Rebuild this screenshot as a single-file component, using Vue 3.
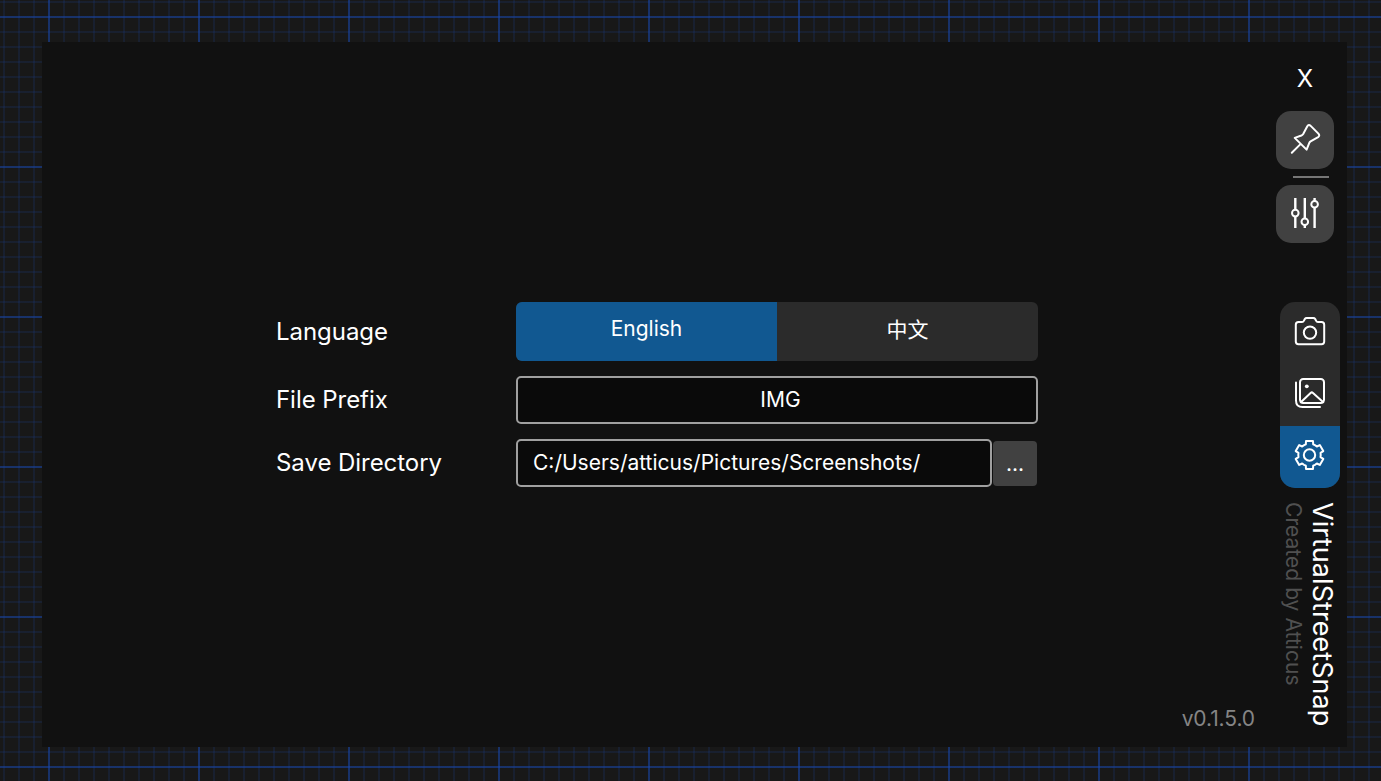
<script setup>
import { ref } from 'vue'

const language = ref('en')
const prefix = ref('IMG')
const directory = ref('C:/Users/atticus/Pictures/Screenshots/')

// Outline of a six-toothed gear, one tooth every 60 degrees.
const tooth = [[-5.4, -9.8], [-3.7, -10.6], [-3.5, -13.9], [3.5, -13.9], [3.7, -10.6], [5.4, -9.8]]
const gear = 'M' + Array.from({ length: 6 }, (_, k) => {
  const a = (k * Math.PI) / 3
  return tooth.map(([x, y]) =>
    `${(x * Math.cos(a) - y * Math.sin(a)).toFixed(2)} ${(x * Math.sin(a) + y * Math.cos(a)).toFixed(2)}`
  ).join('L')
}).join('L') + 'Z'
</script>

<template>
  <div class="desktop">
    <div class="window">
      <main class="content">
        <form class="settings" @submit.prevent>
          <div class="row language">
            <span class="label">Language</span>
            <div class="segmented">
              <button type="button" :class="{ active: language === 'en' }" @click="language = 'en'">English</button>
              <button type="button" :class="{ active: language === 'zh' }" @click="language = 'zh'">中文</button>
            </div>
          </div>
          <div class="row">
            <span class="label">File Prefix</span>
            <div class="field prefix">{{ prefix }}</div>
          </div>
          <div class="row">
            <span class="label">Save Directory</span>
            <div class="field directory">{{ directory }}</div>
            <button type="button" class="browse">...</button>
          </div>
        </form>
        <span class="version">v0.1.5.0</span>
      </main>

      <aside class="sidebar">
        <button class="close">X</button>
        <button class="tile">
          <svg width="58" height="58" viewBox="0 0 58 58">
            <path d="M15.8 41.8L24 33.6M18.7 26.9L25.4 24.5Q26.6 24 27.2 23L31.3 15.3Q32.7 13 34.7 14.9L42.4 22.6Q44.2 24.7 42.1 26.1L34.6 30.3Q33.7 30.9 33.3 31.8L30.6 38.6Z" />
          </svg>
        </button>
        <div class="divider"></div>
        <button class="tile">
          <svg width="58" height="58" viewBox="0 0 58 58">
            <path class="rail" d="M19.3 13V24.8M19.3 31.4V43M28.8 13V33.4M28.8 40V43M38.6 13V16M38.6 22.6V43" />
            <circle cx="19.3" cy="28.1" r="3.3" />
            <circle cx="28.8" cy="36.7" r="3.3" />
            <circle cx="38.6" cy="19.3" r="3.3" />
          </svg>
        </button>
        <nav class="nav">
          <button>
            <svg width="60" height="62" viewBox="0 0 60 62">
              <path d="M18.5 20H22Q23.3 20 24 18.6L24.8 17Q25.4 16 26.8 16H33.2Q34.6 16 35.2 17L36 18.6Q36.7 20 38 20H41.5Q44.2 20 44.2 22.7V39.6Q44.2 42.3 41.5 42.3H18.5Q15.8 42.3 15.8 39.6V22.7Q15.8 20 18.5 20Z" />
              <circle cx="30" cy="30.6" r="6.2" />
            </svg>
          </button>
          <button>
            <svg width="60" height="62" viewBox="0 0 60 62">
              <rect x="20" y="15" width="24" height="24" rx="3.2" />
              <path d="M16 18.5V36.5Q16 43 22.5 43H40M20.8 38.2L30.6 28.9Q31.8 27.9 33 28.9L43.3 38.2" />
              <circle class="dot" cx="26.8" cy="22.3" r="1.9" />
            </svg>
          </button>
          <button class="active">
            <svg width="60" height="62" viewBox="0 0 60 62">
              <g transform="translate(29.5 29)">
                <path :d="gear" />
                <circle r="5.7" />
              </g>
            </svg>
          </button>
        </nav>
        <div class="brand">
          <span class="title">VirtualStreetSnap</span>
          <span class="author">Created by Atticus</span>
        </div>
      </aside>
    </div>
  </div>
</template>

<style>
body {
  background: #181818;
}
</style>

<style scoped>
.desktop {
  box-sizing: border-box;
  width: 1381px;
  height: 781px;
  padding: 42px 34px 34px 42px;
  overflow: hidden;
  font-family: Inter, "Noto Sans CJK SC", sans-serif;
  color: #fff;
  background-color: #181818;
  background-image:
    linear-gradient(90deg, rgba(24, 72, 176, 0.45) 2px, transparent 2px),
    linear-gradient(rgba(24, 72, 176, 0.45) 2px, transparent 2px),
    linear-gradient(90deg, rgba(24, 64, 150, 0.18) 2px, transparent 2px),
    linear-gradient(rgba(24, 64, 150, 0.18) 2px, transparent 2px);
  background-size: 150px 150px, 150px 150px, 15px 15px, 15px 15px;
  background-position: 48px 16px, 48px 16px, 3px 1px, 3px 1px;
}

.window {
  display: flex;
  height: 705px;
  background: #111;
}

.content {
  box-sizing: border-box;
  display: flex;
  flex-direction: column;
  justify-content: space-between;
  width: 1234px;
  padding: 260px 21px 14px 234px;
}

button {
  display: block;
  margin: 0;
  padding: 0;
  border: 0;
  color: #fff;
  background: none;
  font: inherit;
}

.settings {
  display: flex;
  flex-direction: column;
  gap: 15px;
}

.row {
  display: flex;
  height: 48px;
}

.row.language {
  height: 59px;
}

.label {
  width: 240px;
  font-size: 24px;
  line-height: 47px;
  letter-spacing: -0.05px;
}

.language .label {
  line-height: 59px;
}

.segmented {
  display: flex;
  width: 522px;
  border-radius: 6px;
  overflow: hidden;
  background: #2b2b2b;
}

.segmented button {
  flex: 1;
  padding-bottom: 7px;
  font-size: 21px;
}

.segmented .active,
.nav .active {
  background: #115891;
}

.field {
  box-sizing: border-box;
  border: 2px solid #a0a0a0;
  border-radius: 5px;
  background: #0a0a0a;
  font-size: 21px;
  line-height: 43px;
}

.prefix {
  width: 522px;
  padding-left: 7px;
  text-align: center;
}

.directory {
  width: 476px;
  padding-left: 15px;
}

.browse {
  width: 44px;
  height: 45px;
  margin: 2px 0 0 1px;
  border-radius: 4px;
  background: #414141;
  font-size: 21px;
}

.version {
  align-self: flex-end;
  color: #858585;
  font-size: 21px;
  line-height: 28px;
  letter-spacing: -0.08px;
}

.sidebar {
  width: 71px;
}

.close {
  width: 58px;
  height: 69px;
  padding-top: 3px;
  font-size: 24px;
}

.tile {
  width: 58px;
  height: 58px;
  border-radius: 15px;
  background: #414141;
}

svg {
  display: block;
  fill: none;
  stroke: #fff;
  stroke-width: 2;
  stroke-linecap: round;
  stroke-linejoin: round;
}

.rail {
  stroke-width: 2.4;
  stroke-linecap: butt;
}

.dot {
  fill: #fff;
  stroke: none;
}

.divider {
  width: 36px;
  height: 2px;
  margin: 7px 0 7px 17px;
  background: #767676;
}

.nav {
  width: 60px;
  margin: 59px 0 0 4px;
  border-radius: 15px;
  overflow: hidden;
  background: #2b2b2b;
}

.brand {
  display: flex;
  flex-direction: column;
  writing-mode: vertical-rl;
  width: 62px;
  height: 240px;
  padding-top: 14px;
  white-space: nowrap;
}

.title {
  font-size: 27px;
  line-height: 32px;
  letter-spacing: 0.06px;
}

.author {
  color: #505050;
  font-size: 21px;
  line-height: 26px;
  letter-spacing: 0.04px;
}
</style>
